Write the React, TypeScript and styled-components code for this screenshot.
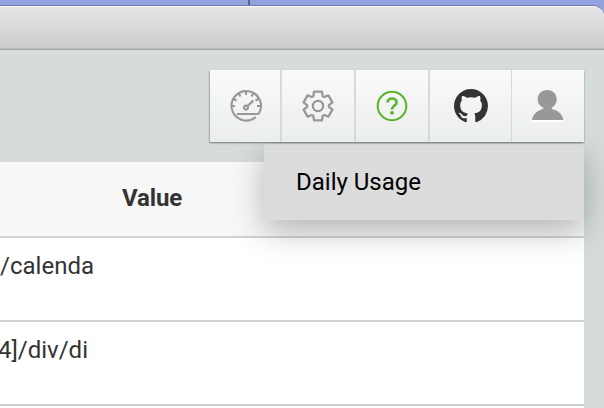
import React from "react";
import styled, { createGlobalStyle } from "styled-components";

const GlobalStyle = createGlobalStyle`
  * { box-sizing: border-box; }
  body { margin: 0; overflow: hidden; font-family: Roboto, sans-serif; }
`;

const Desktop = styled.div`
  width: 604px;
  height: 408px;
  overflow: hidden;
  display: flex;
  flex-direction: column;
  background: #93a1dc;
`;

const DesktopStrip = styled.div`
  height: 5px;
  flex: none;
  display: flex;
  padding-left: 248px;
`;

const WindowDivider = styled.div`
  width: 2px;
  background: #5b628f;
`;

const AppWindow = styled.div`
  flex: 1;
  display: flex;
  flex-direction: column;
  border-top: 1px solid #7078ae;
  border-radius: 0 11px 0 0;
  overflow: hidden;
  background: #d6dbdb;
`;

const TitleBar = styled.div`
  height: 44px;
  flex: none;
  border-top: 1px solid #fbfbfb;
  border-bottom: 1px solid #a5a5a5;
  background: linear-gradient(#e6e6e6, #cbcbcb);
  box-shadow: inset 0 -1px 0 #bcbcbc;
`;

const Page = styled.div`
  flex: 1;
  padding: 20px 20px 0 0;
  display: flex;
  flex-direction: column;
`;

const Toolbar = styled.div`
  position: relative;
  z-index: 1;
  align-self: flex-end;
  display: flex;
  height: 72px;
  flex: none;
`;

const ToolbarButtons = styled.div`
  position: relative;
  z-index: 2;
  display: flex;
  background: #d7dad9;
  box-shadow: 0 1px 2px rgba(0, 0, 0, 0.36), -1px 1px 1px rgba(0, 0, 0, 0.1);
`;

const ToolButton = styled.button<{ $width: number; $gap: number }>`
  width: ${(p) => p.$width}px;
  margin: 0 ${(p) => p.$gap}px 0 0;
  padding: 0;
  border: 0;
  display: flex;
  align-items: center;
  justify-content: center;
  background: linear-gradient(#fafafa, #eaeeec);
`;

const Menu = styled.div`
  position: absolute;
  top: 74px;
  right: 0;
  width: 320px;
  height: 76px;
  padding-left: 32px;
  display: flex;
  align-items: center;
  background: #dcdcdc;
  box-shadow: 0 11px 32px rgba(0, 0, 0, 0.27);
`;

const MenuItem = styled.span`
  font-size: 24px;
  line-height: 28px;
  color: #000;
`;

const Table = styled.div`
  margin-top: 20px;
  display: flex;
  flex-direction: column;
  background: #fff;
  height: 246px;
`;

const Row = styled.div<{ $header?: boolean }>`
  display: grid;
  grid-template-columns: 98px 1fr;
  align-items: ${(p) => (p.$header ? "center" : "start")};
  height: ${(p) => (p.$header ? 76 : 84)}px;
  flex: none;
  padding-top: ${(p) => (p.$header ? 0 : 14)}px;
  border-bottom: 2px solid #d2d2d2;
  background: ${(p) => (p.$header ? "#f7f7f7" : "#fff")};
`;

const HeaderCell = styled.div`
  grid-column: 2;
  padding: 0 0 2px 24px;
  font-size: 24px;
  line-height: 28px;
  font-weight: 700;
  letter-spacing: -0.15px;
  color: #333;
`;

const PathCell = styled.div<{ $end: number }>`
  display: flex;
  justify-content: flex-end;
  padding-right: ${(p) => p.$end}px;
  white-space: nowrap;
  font-size: 24px;
  line-height: 28px;
  color: #333;
`;

const Icon = styled.svg<{ $size: number }>`
  display: block;
  width: ${(p) => p.$size}px;
  height: ${(p) => p.$size}px;
`;

const GaugeIcon = () => (
  <Icon $size={36} viewBox="-19 -18 36 36" fill="none" stroke="#989898" strokeWidth="2.1">
    <path d="M12.4 8.1A14.7 14.7 0 1 0 9.8 11" />
    <path d="M-9.2 8H12.4" />
    {[-90, -60, -30, 0, 30, 60, 90].map((a) => (
      <path key={a} d="M0-14.5V-11" transform={`rotate(${a})`} />
    ))}
    <circle cx="0" cy="1.6" r="2" />
    <path d="M1.6 0 7.4-5.5" strokeWidth="2.4" />
  </Icon>
);

const GearIcon = () => (
  <Icon $size={36} viewBox="-18 -18 36 36" fill="none" stroke="#989898" strokeWidth="2.3" strokeLinejoin="round">
    <circle r="5.1" />
    <path d="M-4-14.3H4L4.7-9.8 6.2-9 10.4-10.6 14.4-3.7 10.9-.9V.9L14.4 3.7 10.4 10.6 6.2 9 4.7 9.8 4 14.3H-4L-4.7 9.8-6.2 9-10.4 10.6-14.4 3.7-10.9.9V-.9L-14.4-3.7-10.4-10.6-6.2-9-4.7-9.8Z" />
  </Icon>
);

const HelpIcon = () => (
  <Icon $size={36} viewBox="-18 -18 36 36" fill="none" stroke="#5cb52b">
    <circle r="14.3" strokeWidth="2.1" />
    <path d="M-4.5-3.4C-4.5-9 4.7-8.7 4.6-3.6 4.5-.6 0-.2 0 3.6" strokeWidth="2.7" />
    <circle cy="6.8" r="1.9" fill="#5cb52b" stroke="none" />
  </Icon>
);

const GithubIcon = () => (
  <Icon $size={34} viewBox="0 0 16 16" fill="#333">
    <path d="M8 0C3.58 0 0 3.58 0 8c0 3.54 2.29 6.53 5.47 7.59.4.07.55-.17.55-.38 0-.19-.01-.82-.01-1.49-2.01.37-2.53-.49-2.69-.94-.09-.23-.48-.94-.82-1.13-.28-.15-.68-.52-.01-.53.63-.01 1.08.58 1.23.82.72 1.21 1.87.87 2.33.66.07-.52.28-.87.51-1.07-1.78-.2-3.64-.89-3.64-3.95 0-.87.31-1.59.82-2.15-.08-.2-.36-1.02.08-2.12 0 0 .67-.21 2.2.82.64-.18 1.32-.27 2-.27.68 0 1.36.09 2 .27 1.53-1.04 2.2-.82 2.2-.82.44 1.1.16 1.92.08 2.12.51.56.82 1.27.82 2.15 0 3.07-1.87 3.75-3.65 3.95.29.25.54.73.54 1.48 0 1.07-.01 1.93-.01 2.2 0 .21.15.46.55.38A8.01 8.01 0 0 0 16 8c0-4.42-3.58-8-8-8z" />
  </Icon>
);

const UserIcon = () => (
  <Icon $size={36} viewBox="-18 -18 36 36">
    <path d="M-16 14H15.5V16H-16Z" fill="#fff" />
    <path d="M-1-16C5-16 8.7-12 8.7-6.5 8.7-3 7-.2 3.6 1.8 3.5 3 4.5 3.3 7 4.1 11.5 5.8 14.6 9.3 15.3 14H-16C-15.4 9.3-12 5.8-7.6 4.1-5.6 3.4-4.4 3-4.6 1.8-8.5-.2-10.3-3-10.3-6.5-10.3-12-6.5-16-1-16Z" fill="#989898" />
  </Icon>
);

const tools = [
  { name: "Usage", width: 70, gap: 2, Glyph: GaugeIcon },
  { name: "Settings", width: 72, gap: 2, Glyph: GearIcon },
  { name: "Help", width: 72, gap: 2, Glyph: HelpIcon },
  { name: "GitHub", width: 81, gap: 1, Glyph: GithubIcon },
  { name: "Account", width: 72, gap: 0, Glyph: UserIcon },
];

export default function App() {
  return (
    <Desktop>
      <GlobalStyle />
      <DesktopStrip>
        <WindowDivider />
      </DesktopStrip>
      <AppWindow>
        <TitleBar />
        <Page>
          <Toolbar>
            <ToolbarButtons>
              {tools.map(({ name, width, gap, Glyph }) => (
                <ToolButton key={name} $width={width} $gap={gap} aria-label={name}>
                  <Glyph />
                </ToolButton>
              ))}
            </ToolbarButtons>
            <Menu>
              <MenuItem>Daily Usage</MenuItem>
            </Menu>
          </Toolbar>
          <Table>
            <Row $header>
              <HeaderCell>Value</HeaderCell>
            </Row>
            <Row>
              <PathCell $end={4}>/calenda</PathCell>
            </Row>
            <Row>
              <PathCell $end={10}>4]/div/di</PathCell>
            </Row>
          </Table>
        </Page>
      </AppWindow>
    </Desktop>
  );
}
